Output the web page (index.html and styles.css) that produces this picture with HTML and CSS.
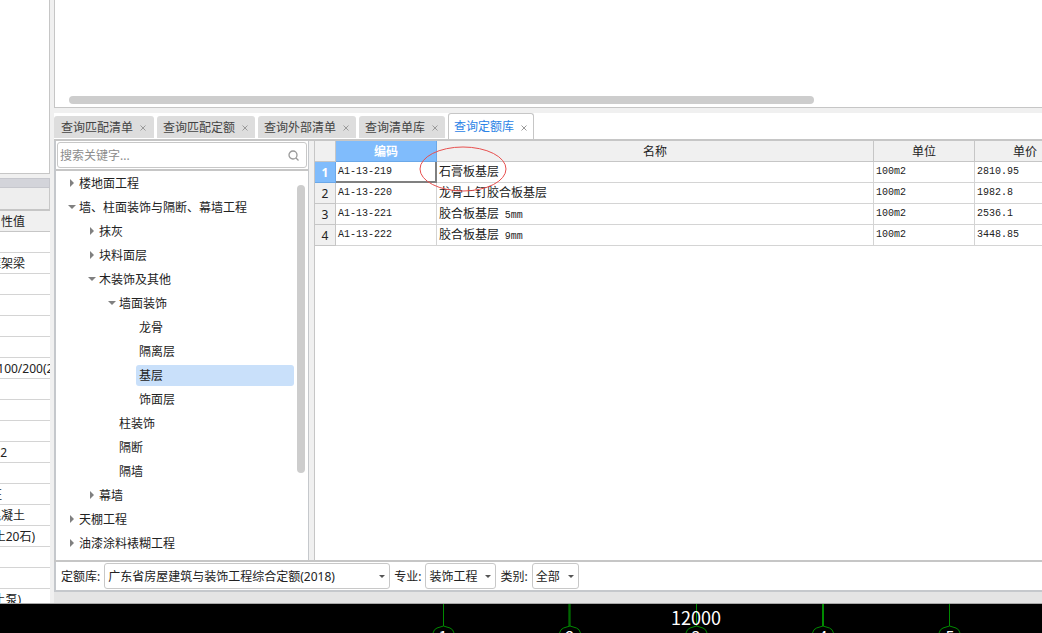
FILE: index.html
```html
<!DOCTYPE html>
<html lang="zh-CN">
<head>
<meta charset="utf-8">
<title>查询定额库</title>
<link rel="stylesheet" href="styles.css">
</head>
<body>
<div class="workspace">
  <aside class="side">
    <div class="side-top"></div>
    <div class="side-strip"></div>
    <div class="side-tools"></div>
    <div class="side-head"><span class="end-a">性值</span></div>
    <div class="prop"></div>
    <div class="prop"><span class="end-a">框架梁</span></div>
    <div class="prop"></div>
    <div class="prop"></div>
    <div class="prop"></div>
    <div class="prop"></div>
    <div class="prop"><span class="end-d">100/200(2)</span></div>
    <div class="prop"></div>
    <div class="prop"></div>
    <div class="prop"></div>
    <div class="prop"><span class="end-c">2</span></div>
    <div class="prop"></div>
    <div class="prop"><span class="end-e">征</span></div>
    <div class="prop"><span class="end-a">混凝土</span></div>
    <div class="prop"><span class="end-b">土20石)</span></div>
    <div class="prop"></div>
    <div class="prop"></div>
    <div class="prop"><span class="end-f">土泵)</span></div>
  </aside>

  <main class="main">
    <section class="upper"><div class="hscroll"></div></section>

    <section class="query">
      <nav class="tabs">
        <div class="tab"><span>查询匹配清单</span><button class="close" aria-label="关闭"><svg viewBox="0 0 6 6"><path d="M.5 .5l5 5M5.500 .5l-5 5"/></svg></button></div>
        <div class="tab"><span>查询匹配定额</span><button class="close" aria-label="关闭"><svg viewBox="0 0 6 6"><path d="M.5 .5l5 5M5.500 .5l-5 5"/></svg></button></div>
        <div class="tab"><span>查询外部清单</span><button class="close" aria-label="关闭"><svg viewBox="0 0 6 6"><path d="M.5 .5l5 5M5.500 .5l-5 5"/></svg></button></div>
        <div class="tab"><span>查询清单库</span><button class="close" aria-label="关闭"><svg viewBox="0 0 6 6"><path d="M.5 .5l5 5M5.500 .5l-5 5"/></svg></button></div>
        <div class="tab active"><span>查询定额库</span><button class="close" aria-label="关闭"><svg viewBox="0 0 6 6"><path d="M.5 .5l5 5M5.500 .5l-5 5"/></svg></button></div>
      </nav>

      <div class="panes">
        <div class="tree-pane">
          <div class="search-row">
            <label class="search">
              <input type="text" placeholder="搜索关键字..." aria-label="搜索关键字">
              <svg viewBox="0 0 11 11"><circle cx="5" cy="5" r="4"/><path d="M8 8l2.500 2.500"/></svg>
            </label>
          </div>
          <div class="tree-body">
            <ul class="tree">
              <li class="l1"><i class="shut"></i><span>楼地面工程</span></li>
              <li class="l1"><i class="open"></i><span>墙、柱面装饰与隔断、幕墙工程</span></li>
              <li class="l2"><i class="shut"></i><span>抹灰</span></li>
              <li class="l2"><i class="shut"></i><span>块料面层</span></li>
              <li class="l2"><i class="open"></i><span>木装饰及其他</span></li>
              <li class="l3"><i class="open"></i><span>墙面装饰</span></li>
              <li class="l4"><i></i><span>龙骨</span></li>
              <li class="l4"><i></i><span>隔离层</span></li>
              <li class="l4"><i></i><span class="picked">基层</span></li>
              <li class="l4"><i></i><span>饰面层</span></li>
              <li class="l3"><i></i><span>柱装饰</span></li>
              <li class="l3"><i></i><span>隔断</span></li>
              <li class="l3"><i></i><span>隔墙</span></li>
              <li class="l2"><i class="shut"></i><span>幕墙</span></li>
              <li class="l1"><i class="shut"></i><span>天棚工程</span></li>
              <li class="l1"><i class="shut"></i><span>油漆涂料裱糊工程</span></li>
            </ul>
            <div class="vscroll"><div class="thumb"></div></div>
          </div>
        </div>

        <div class="grid-pane">
          <table class="grid">
            <colgroup><col class="c-num"><col class="c-code"><col><col class="c-unit"><col class="c-unit"></colgroup>
            <thead>
              <tr><th></th><th class="hot">编码</th><th>名称</th><th>单位</th><th>单价</th></tr>
            </thead>
            <tbody>
              <tr><th class="hot">1</th><td class="current">A1-13-219</td><td class="name">石膏板基层</td><td>100m2</td><td>2810.95</td></tr>
              <tr><th>2</th><td>A1-13-220</td><td class="name">龙骨上钉胶合板基层</td><td>100m2</td><td>1982.8</td></tr>
              <tr><th>3</th><td>A1-13-221</td><td class="name">胶合板基层 <small>5mm</small></td><td>100m2</td><td>2536.1</td></tr>
              <tr><th>4</th><td>A1-13-222</td><td class="name">胶合板基层 <small>9mm</small></td><td>100m2</td><td>3448.85</td></tr>
            </tbody>
          </table>
          <svg class="mark" viewBox="0 0 88 46"><ellipse cx="44" cy="23" rx="43" ry="22"/></svg>
        </div>
      </div>

      <form class="filters">
        <label for="lib">定额库:</label>
        <div class="pick pick-lib"><select id="lib"><option>广东省房屋建筑与装饰工程综合定额(2018)</option></select></div>
        <label for="major">专业:</label>
        <div class="pick pick-major"><select id="major"><option>装饰工程</option></select></div>
        <label for="kind">类别:</label>
        <div class="pick pick-kind"><select id="kind"><option>全部</option></select></div>
      </form>
    </section>
    <div class="base"></div>
  </main>
</div>

<div class="canvas">
  <svg width="1042" height="29" viewBox="0 0 1042 29">
    <g class="axis">
      <path d="M443.500 0V22M569 0V22M570 0V22M696.500 0V22M822.500 0V22M823.500 0V22M949.500 0V22"/>
      <path d="M433 29q1-4 4-5l6.500-2 6.500 2q3 1 4 5M559.500 29q1-4 4-5l6.500-2 6.500 2q3 1 4 5M686 29q1-4 4-5l6.500-2 6.500 2q3 1 4 5M812.500 29q1-4 4-5l6.500-2 6.500 2q3 1 4 5M939 29q1-4 4-5l6.500-2 6.500 2q3 1 4 5"/>
    </g>
    <text class="span" x="696" y="21">12000</text>
    <g class="no">
      <text x="443" y="39">1</text><text x="570" y="39">2</text><text x="696" y="39">3</text><text x="823" y="39">4</text><text x="950" y="39">5</text>
    </g>
  </svg>
</div>
</body>
</html>
```

FILE: styles.css
```css
* { box-sizing: border-box; }

body {
  margin: 0;
  height: 100vh;
  display: flex;
  flex-direction: column;
  overflow: hidden;
  background: #f0f0f0;
  color: #222;
  font: 12px/22px "Noto Sans", "Noto Sans CJK SC", sans-serif;
}

input, select, button { font: inherit; color: inherit; }

.workspace {
  flex: 1;
  min-height: 0;
  display: flex;
  gap: 4px;
  border-bottom: 1px solid #a9a9a9;
}

/* property panel */
.side {
  width: 50px;
  overflow: hidden;
  display: flex;
  flex-direction: column;
  white-space: nowrap;
}
.side > * { flex: none; }
.side-top {
  height: 174px;
  margin-bottom: 4px;
  background: #fff;
  border: solid #c6c6c6;
  border-width: 0 1px 1px 0;
}
.side-strip { height: 10px; background: #d3d4da; border: 1px solid #c6c7cd; border-left: 0; }
.side-tools { height: 23px; background: #eee; border-right: 1px solid #c8c8c8; border-bottom: 2px solid #c6c6c6; }
.side-head { height: 21px; border-bottom: 1px solid #c6c6c6; }
.prop { height: 21px; background: #fff; border-bottom: 1px solid #d4d4d4; }
.side span { display: flex; justify-content: flex-end; }
.end-a { width: 25px; }
.end-b { width: 35px; }
.end-c { width: 7px; }
.end-d { width: 57px; }
.end-e { width: 2px; }
.end-f { width: 21px; }

/* main column */
.main { flex: 1; min-width: 0; display: flex; flex-direction: column; }
.upper {
  height: 108px;
  margin-bottom: 5px;
  padding: 0 228px 3px 14px;
  display: flex;
  align-items: flex-end;
  background: #fff;
  border: solid #c6c6c6;
  border-width: 0 0 1px 1px;
}
.hscroll { flex: 1; height: 8px; border-radius: 4px; background: #cdcdcd; }

.query { flex: 1; min-height: 0; display: flex; flex-direction: column; background: #fff; }

.tabs { height: 26px; display: flex; align-items: flex-end; gap: 3px; }
.tab {
  height: 22px;
  margin-bottom: 1px;
  padding: 1px 7px 0 6px;
  display: flex;
  align-items: center;
  gap: 7px;
  background: #ddd;
  border-radius: 3px 3px 0 0;
  color: #444;
}
.tab:first-child { padding: 1px 8px 0 7px; }
.tab.active {
  height: 27px;
  margin-bottom: -1px;
  padding: 0 6px 0 5px;
  background: #fff;
  border: 1px solid #c6c6c6;
  border-bottom: 0;
  color: #2b83e6;
}
.close { padding: 1px 0 0; border: 0; background: none; display: flex; }
.close svg { width: 6px; height: 6px; fill: none; stroke: #999; }

.panes {
  flex: 1;
  min-height: 0;
  display: flex;
  gap: 5px;
  background: #f0f0f0;
  border-top: 2px solid #c6c6c6;
  border-bottom: 2px solid #c6c6c6;
}

/* tree */
.tree-pane {
  width: 255px;
  display: flex;
  flex-direction: column;
  background: #fff;
  border: solid #c5c8cc;
  border-width: 0 1px 0 2px;
}
.search-row { padding: 1px; border-bottom: 2px solid #c6c6c6; }
.search {
  height: 26px;
  padding: 0 7px 0 2px;
  display: flex;
  align-items: center;
  border: 1px solid #c8c8c8;
  border-radius: 3px;
}
.search input { flex: 1; min-width: 0; padding: 2px 0 0; border: 0; outline: 0; background: none; }
.search input::placeholder { color: #8c8c8c; }
.search svg { width: 11px; height: 11px; fill: none; stroke: #999; stroke-width: 1.3; }

.tree-body { flex: 1; min-height: 0; display: flex; overflow: hidden; }
.tree { flex: 1; margin: 0; padding: 0; list-style: none; }
.tree li { height: 24px; display: flex; align-items: center; }
.tree i { width: 9px; display: flex; justify-content: center; }
.tree span { flex: 1; height: 21px; margin-right: 3px; padding-left: 3px; border-radius: 3px; white-space: nowrap; }
.tree .picked { background: #c9e0fa; }
.l1 { padding-left: 11px; }
.l2 { padding-left: 31px; }
.l3 { padding-left: 51px; }
.l4 { padding-left: 71px; }
.shut::before { content: ""; border: solid transparent; border-width: 4px 0 4px 4px; border-left-color: #808080; }
.open::before { content: ""; border: solid transparent; border-width: 4px 4px 0; border-top-color: #808080; }
.vscroll { width: 11px; padding: 14px 3px 87px 0; display: flex; }
.thumb { flex: 1; border-radius: 4px; background: #cdcdcd; }

/* result grid */
.grid-pane { position: relative; flex: 1; min-width: 0; overflow: hidden; background: #fff; border-left: 1px solid #c6c6c6; }
.grid { width: calc(100% + 34px); table-layout: fixed; border-collapse: separate; border-spacing: 0; line-height: 18px; }
.c-num { width: 21px; }
.c-code, .c-unit { width: 101px; }
.grid th {
  height: 21px;
  padding: 2px 0 0;
  background: #f0f0f0;
  border: solid #c6c6c6;
  border-width: 0 1px 1px 0;
  font-weight: 400;
}
.grid .hot { background: #80bcfc; border-color: #6ba8e8; color: #fff; font-weight: 700; }
.grid td {
  height: 21px;
  padding: 0 0 0 2px;
  border: solid #d4d4d4;
  border-width: 0 1px 1px 0;
  font: 10px/18px "Liberation Mono", monospace;
  white-space: nowrap;
}
.grid .name { padding-bottom: 2px; font: 12px/18px "Noto Sans CJK SC", sans-serif; }
.name small { margin-left: 3px; font: 10px/10px "Liberation Mono", monospace; }
.grid .current { border-color: #808080; box-shadow: inset -1px -1px #808080; }
.mark { position: absolute; left: 104px; top: 5px; width: 88px; height: 46px; fill: none; stroke: #e8504f; }

/* filters */
.filters { height: 28px; padding-left: 5px; display: flex; align-items: center; border-left: 2px solid #c5c8cc; }
.filters label { margin-right: 4px; padding-top: 2px; white-space: nowrap; }
.pick { position: relative; height: 26px; margin-right: 4px; }
.pick::after {
  content: "";
  position: absolute;
  right: 5px;
  top: 12px;
  border: solid transparent;
  border-width: 3px 3px 0;
  border-top-color: #555;
}
.pick select {
  appearance: none;
  width: 100%;
  height: 26px;
  padding: 2px 3px 0;
  border: 1px solid #c8c8c8;
  border-radius: 3px;
  background: #fff;
}
.pick-lib { width: 286px; }
.pick-major { width: 71px; }
.pick-kind { width: 47px; }
.base { height: 13px; background: #e4e4e4; border-top: 2px solid #c5c8cc; }

/* drawing canvas */
.canvas { height: 29px; overflow: hidden; background: #000; }
.canvas svg { display: block; }
.axis { fill: none; stroke: #008a00; }
.span, .no { fill: #fff; text-anchor: middle; font-family: "Noto Sans CJK SC", sans-serif; }
.span { font-size: 18px; }
.no { font-size: 16px; }
```
